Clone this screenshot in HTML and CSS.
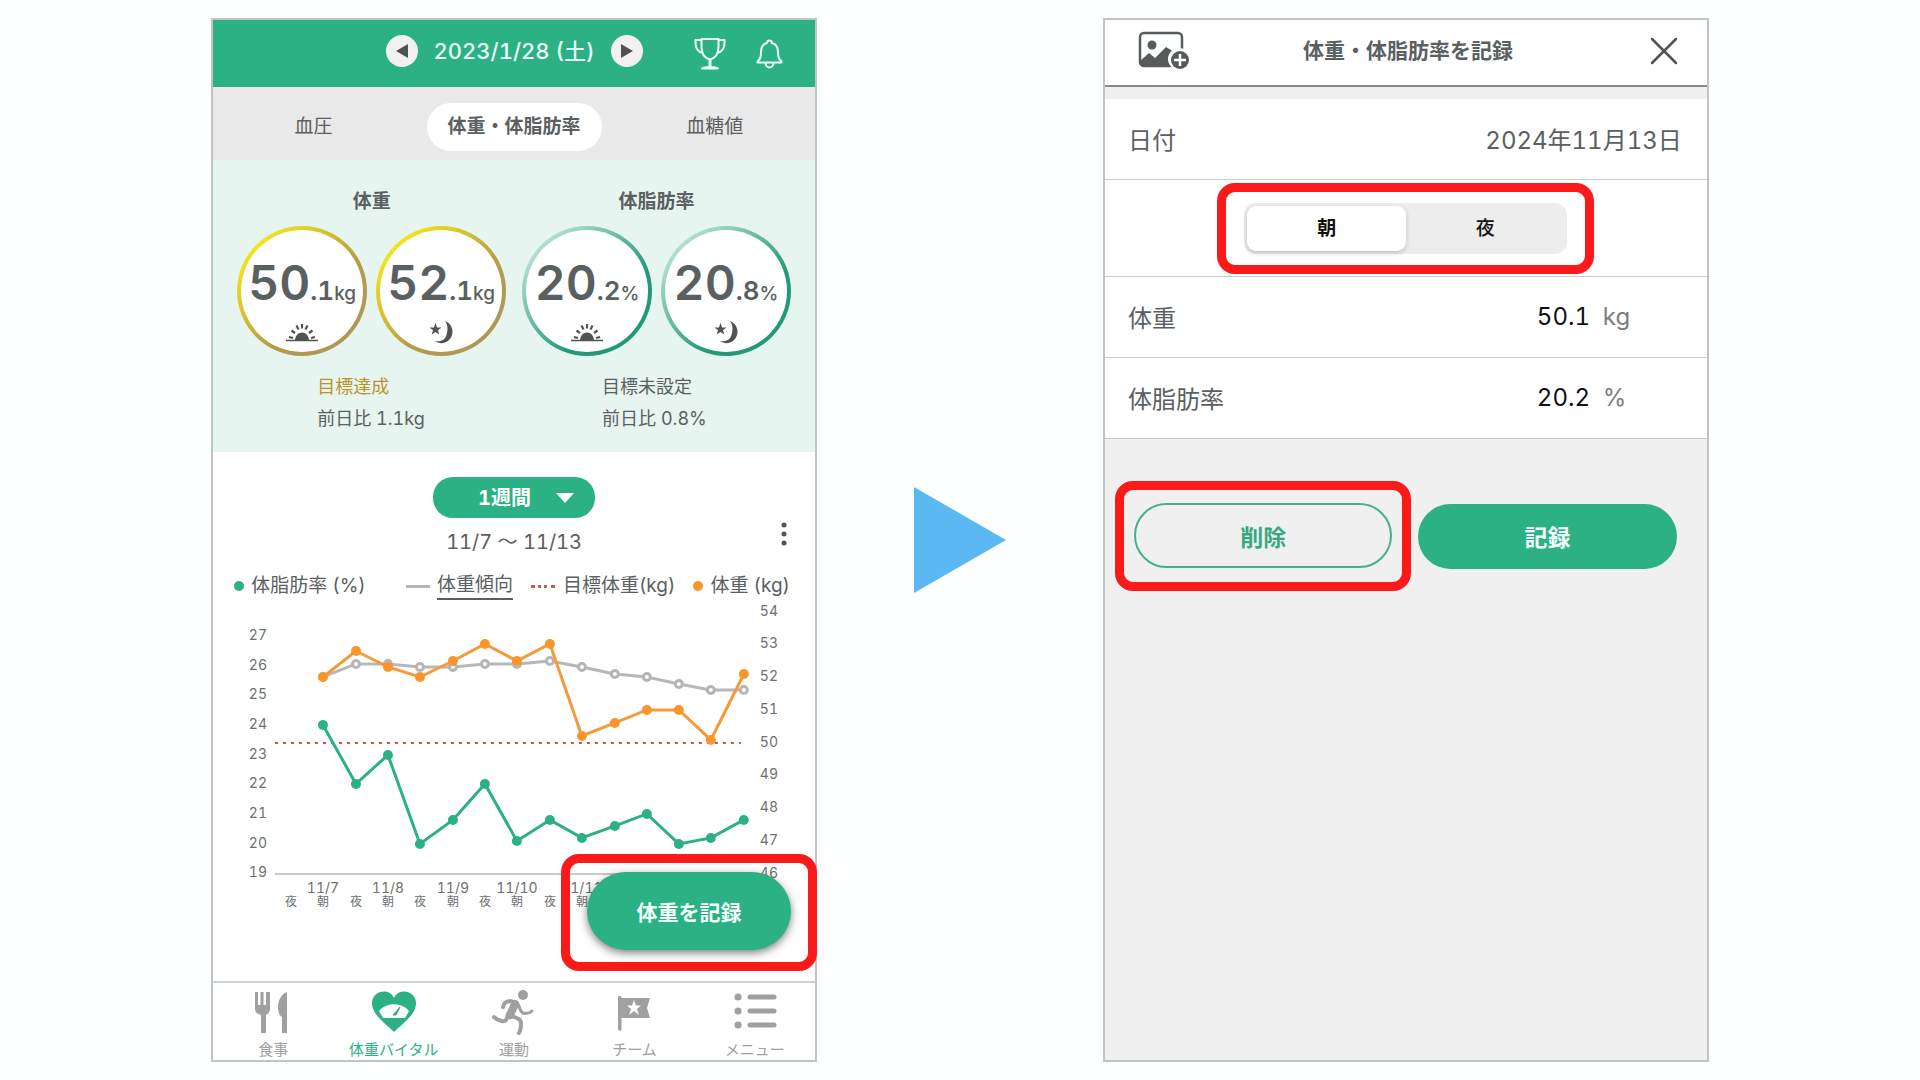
FILE: index.html
```html
<!DOCTYPE html>
<html lang="ja">
<head>
    <meta charset="UTF-8">
    <meta name="viewport" content="width=device-width, initial-scale=1.0">
    <title>体重・体脂肪率の記録</title>
    <link rel="stylesheet" href="styles.css">
</head>
<body>
    <svg class="defs" width="0" height="0" aria-hidden="true">
        <symbol id="sun" viewBox="0 0 32 24">
            <path d="M0 20.500h32" stroke="#4f5453" stroke-width="1.500"/>
            <path d="M9 20a7 7.500 0 0 1 14 0z" fill="#4f5453"/>
            <path d="M3 17l4 1M5.500 10.500l3.500 2.500M10.500 5.500l2 4M16 4v4.500M21.500 5.500l-2 4M26.500 10.500L23 13M29 17l-4 1" stroke="#4f5453" stroke-width="2.200"/>
        </symbol>
        <symbol id="moon" viewBox="0 0 24 24">
            <path d="M16 1c8 3 10 13 4 19-4 4-10 4-14 1 6 1 10-1 11.500-6C19 10 19 5 16 1z" fill="#4f5453"/>
            <path d="M6.500 3l1.600 4.500h4.400L9 10.200l1.300 4.400-3.800-2.700-3.800 2.700L4 10.200.500 7.500h4.400z" fill="#4f5453"/>
        </symbol>
    </svg>

    <main class="page">
        <section class="phone">
            <header class="app-header">
                <div class="date-nav">
                    <button class="round-btn" aria-label="前の日">
                        <svg width="12" height="14" viewBox="0 0 12 14"><path d="M12 0v14L0 7z" fill="#4f5453"/></svg>
                    </button>
                    <span class="date">2023/1/28 (土)</span>
                    <button class="round-btn" aria-label="次の日">
                        <svg width="12" height="14" viewBox="0 0 12 14"><path d="M0 0v14l12-7z" fill="#4f5453"/></svg>
                    </button>
                </div>
                <div class="header-icons">
                    <button class="icon-btn" aria-label="トロフィー">
                        <svg width="32" height="34" viewBox="0 0 32 34" fill="none" stroke="#e9fff8" stroke-width="2" stroke-linejoin="round">
                            <path d="M7.500 2h17v8c0 6-3 11-8.500 12.500C10.500 21 7.500 16 7.500 10z"/>
                            <path d="M7.500 3H1.500v3c0 6 3 9 7.500 10M24.500 3h6v3c0 6-3 9-7.500 10"/>
                            <path d="M16 22.500V30" stroke-width="3"/>
                            <path d="M8 31.500c2-1.500 5-1.500 8-1.500s6 0 8 1.500z"/>
                        </svg>
                    </button>
                    <button class="icon-btn" aria-label="お知らせ">
                        <svg width="27" height="30" viewBox="0 0 27 30" fill="none" stroke="#e9fff8" stroke-width="2" stroke-linecap="round" stroke-linejoin="round">
                            <path d="M11 4a2.500 2.500 0 0 1 5 0c4 1 6 4.500 6 9 0 6 1 7 3.500 9.500v1h-24v-1C4 20 5 19 5 13c0-4.500 2-8 6-9z"/>
                            <path d="M9.500 24a4 4.500 0 0 0 8 0"/>
                        </svg>
                    </button>
                </div>
            </header>

            <nav class="tabs">
                <a class="tab" href="#">血圧</a>
                <a class="tab active" href="#">体重・体脂肪率</a>
                <a class="tab" href="#">血糖値</a>
            </nav>

            <div class="summary">
                <div class="group">
                    <h2>体重</h2>
                    <div class="rings">
                        <div class="ring gold">
                            <p class="value"><b>50</b><span class="decimal">.1</span><span class="unit">kg</span></p>
                            <svg width="32" height="24"><use href="#sun"/></svg>
                        </div>
                        <div class="ring gold">
                            <p class="value"><b>52</b><span class="decimal">.1</span><span class="unit">kg</span></p>
                            <svg width="24" height="24"><use href="#moon"/></svg>
                        </div>
                    </div>
                    <p class="note"><span class="achieved">目標達成</span><br>前日比 1.1kg</p>
                </div>
                <div class="group">
                    <h2>体脂肪率</h2>
                    <div class="rings">
                        <div class="ring green">
                            <p class="value"><b>20</b><span class="decimal">.2</span><span class="unit">%</span></p>
                            <svg width="32" height="24"><use href="#sun"/></svg>
                        </div>
                        <div class="ring green">
                            <p class="value"><b>20</b><span class="decimal">.8</span><span class="unit">%</span></p>
                            <svg width="24" height="24"><use href="#moon"/></svg>
                        </div>
                    </div>
                    <p class="note">目標未設定<br>前日比 0.8%</p>
                </div>
            </div>

            <div class="chart-head">
                <div class="period">
                    <div class="select-wrap">
                        <select aria-label="期間">
                            <option>1週間</option>
                        </select>
                    </div>
                    <p class="range">11/7 〜 11/13</p>
                </div>
                <button class="icon-btn kebab" aria-label="その他">
                    <svg width="6" height="24" viewBox="0 0 6 24" fill="#4f5453"><circle cx="3" cy="3" r="2.500"/><circle cx="3" cy="12" r="2.500"/><circle cx="3" cy="21" r="2.500"/></svg>
                </button>
            </div>

            <ul class="legend">
                <li><i class="dot fat"></i>体脂肪率 (%)</li>
                <li><i class="line"></i><a href="#">体重傾向</a></li>
                <li><i class="dash"></i>目標体重(kg)</li>
                <li><i class="dot weight"></i>体重 (kg)</li>
            </ul>

            <svg class="chart" viewBox="0 0 602 380" role="img" aria-label="体重と体脂肪率のグラフ">
                <g class="axis left">
                    <text x="54" y="40">27</text><text x="54" y="70">26</text><text x="54" y="99">25</text>
                    <text x="54" y="129">24</text><text x="54" y="159">23</text><text x="54" y="188">22</text>
                    <text x="54" y="218">21</text><text x="54" y="248">20</text><text x="54" y="277">19</text>
                </g>
                <g class="axis">
                    <text x="547" y="16">54</text><text x="547" y="48">53</text><text x="547" y="81">52</text>
                    <text x="547" y="114">51</text><text x="547" y="147">50</text><text x="547" y="179">49</text>
                    <text x="547" y="212">48</text><text x="547" y="245">47</text><text x="547" y="278">46</text>
                </g>
                <g class="axis days">
                    <text x="110" y="293">11/7</text><text x="175" y="293">11/8</text><text x="240" y="293">11/9</text>
                    <text x="304" y="293">11/10</text><text x="369" y="293">11/11</text>
                </g>
                <g class="axis times">
                    <text x="78" y="306">夜</text><text x="110" y="306">朝</text><text x="143" y="306">夜</text>
                    <text x="175" y="306">朝</text><text x="207" y="306">夜</text><text x="240" y="306">朝</text>
                    <text x="272" y="306">夜</text><text x="304" y="306">朝</text><text x="337" y="306">夜</text>
                    <text x="369" y="306">朝</text>
                </g>
                <path d="M62 274H540" stroke="#b5b8b8" stroke-width="1.500"/>
                <path d="M62 143H528" stroke="#c4554f" stroke-width="2" stroke-dasharray="3 5"/>

                <!-- 体重傾向 -->
                <polyline class="series trend" points="110,77 143,64 175,64 207,67 240,67 272,64 304,64 337,61 369,67 402,74 434,77 466,84 498,90 531,90"/>
                <g class="trend-dots">
                    <circle cx="110" cy="77" r="3.500"/><circle cx="143" cy="64" r="3.500"/><circle cx="175" cy="64" r="3.500"/>
                    <circle cx="207" cy="67" r="3.500"/><circle cx="240" cy="67" r="3.500"/><circle cx="272" cy="64" r="3.500"/>
                    <circle cx="304" cy="64" r="3.500"/><circle cx="337" cy="61" r="3.500"/><circle cx="369" cy="67" r="3.500"/>
                    <circle cx="402" cy="74" r="3.500"/><circle cx="434" cy="77" r="3.500"/><circle cx="466" cy="84" r="3.500"/>
                    <circle cx="498" cy="90" r="3.500"/><circle cx="531" cy="90" r="3.500"/>
                </g>

                <!-- 体重 -->
                <polyline class="series weight" points="110,77 143,51 175,67 207,77 240,61 272,44 304,61 337,44 369,136 402,123 434,110 466,110 498,140 531,74"/>
                <g fill="#fb952b">
                    <circle cx="110" cy="77" r="5"/><circle cx="143" cy="51" r="5"/><circle cx="175" cy="67" r="5"/>
                    <circle cx="207" cy="77" r="5"/><circle cx="240" cy="61" r="5"/><circle cx="272" cy="44" r="5"/>
                    <circle cx="304" cy="61" r="5"/><circle cx="337" cy="44" r="5"/><circle cx="369" cy="136" r="5"/>
                    <circle cx="402" cy="123" r="5"/><circle cx="434" cy="110" r="5"/><circle cx="466" cy="110" r="5"/>
                    <circle cx="498" cy="140" r="5"/><circle cx="531" cy="74" r="5"/>
                </g>

                <!-- 体脂肪率 -->
                <polyline class="series fat" points="110,125 143,184 175,155 207,244 240,220 272,184 304,241 337,220 369,238 402,226 434,214 466,244 498,238 531,220"/>
                <g fill="#2bb183">
                    <circle cx="110" cy="125" r="5"/><circle cx="143" cy="184" r="5"/><circle cx="175" cy="155" r="5"/>
                    <circle cx="207" cy="244" r="5"/><circle cx="240" cy="220" r="5"/><circle cx="272" cy="184" r="5"/>
                    <circle cx="304" cy="241" r="5"/><circle cx="337" cy="220" r="5"/><circle cx="369" cy="238" r="5"/>
                    <circle cx="402" cy="226" r="5"/><circle cx="434" cy="214" r="5"/><circle cx="466" cy="244" r="5"/>
                    <circle cx="498" cy="238" r="5"/><circle cx="531" cy="220" r="5"/>
                </g>
            </svg>

            <div class="highlight fab-wrap">
                <button class="fab">体重を記録</button>
            </div>

            <nav class="bottom-nav">
                <a href="#">
                    <svg width="46" height="46" viewBox="0 0 46 46" fill="currentColor">
                        <path d="M5 2h3v13h2.500V2h3v13H16V2h4v17c0 3-2 5-4 6v18h-5V25c-4-1-6-3-6-6z"/>
                        <path d="M37 2v41h-5V27c-6-3-6-21 5-25z"/>
                    </svg>
                    食事
                </a>
                <a class="active" href="#">
                    <svg width="46" height="46" viewBox="0 0 46 46">
                        <path d="M23 42C15 34 1 25 1 13 1 1 18-3 23 8 28-3 45 1 45 13c0 12-14 21-22 29z" fill="currentColor"/>
                        <path d="M8 21c7-9 23-9 30 0l-4 7H12z" fill="#fff"/>
                        <path d="M22 25l7-8-4 8z" fill="currentColor" stroke="currentColor"/>
                    </svg>
                    体重バイタル
                </a>
                <a href="#">
                    <svg width="46" height="46" viewBox="0 0 46 46" fill="none" stroke="currentColor" stroke-linecap="round" stroke-linejoin="round">
                        <circle cx="32" cy="5" r="5" fill="currentColor" stroke="none"/>
                        <path d="M12 17c1-5 4-6 8-6l5 2" stroke-width="4"/>
                        <path d="M24 14l-5 11" stroke-width="8"/>
                        <path d="M27 14c2 3 2 8 5 9s7 0 9-2" stroke-width="3"/>
                        <path d="M20 26c6 2 10 3 10 7 0 3 0 7-2 10" stroke-width="4"/>
                        <path d="M17 24c-1 5-2 8-6 7s-5-1-8-4" stroke-width="4"/>
                    </svg>
                    運動
                </a>
                <a href="#">
                    <svg width="46" height="46" viewBox="0 0 46 46">
                        <path d="M7 7.500a1.500 1.500 0 0 1 3.500 0V8H39l-3 10 3 10H10.500v11a1.500 1.500 0 0 1-3.500 0z" fill="currentColor"/>
                        <path d="M23 10l2 5.500h5l-4 3.500 2 6-5-4-5 4 2-6-4-3.500h5z" fill="#fff"/>
                    </svg>
                    チーム
                </a>
                <a href="#">
                    <svg width="46" height="46" viewBox="0 0 46 46" stroke="currentColor" stroke-linecap="round">
                        <path d="M18 7h24M18 21h24M18 35h24" stroke-width="5"/>
                        <path d="M6 7h.1M6 21h.1M6 35h.1" stroke-width="7"/>
                    </svg>
                    メニュー
                </a>
            </nav>
        </section>

        <svg class="arrow" width="92" height="106" viewBox="0 0 92 106" aria-hidden="true"><path d="M0 0l92 53L0 106z" fill="#5cb8f2"/></svg>

        <section class="phone record">
            <header class="record-header">
                <button class="icon-btn" aria-label="写真を追加">
                    <svg width="52" height="40" viewBox="0 0 52 40">
                        <rect x="2" y="2" width="42" height="33" rx="4" fill="#fff" stroke="#565c5b" stroke-width="2.500"/>
                        <circle cx="14" cy="14" r="4.500" fill="#565c5b"/>
                        <path d="M2 30l9-8 6 5L28 16l5 3 11 10v6H4z" fill="#565c5b"/>
                        <circle cx="41" cy="28" r="11" fill="#fff"/>
                        <circle cx="42" cy="29" r="9" fill="#565c5b"/>
                        <path d="M42 23v12M36 29h12" stroke="#fff" stroke-width="2.500"/>
                    </svg>
                </button>
                <h1>体重・体脂肪率を記録</h1>
                <button class="icon-btn close" aria-label="閉じる">
                    <svg width="28" height="28" viewBox="0 0 28 28"><path d="M2 2l24 24M26 2L2 26" stroke="#4f5453" stroke-width="2.500" stroke-linecap="round"/></svg>
                </button>
            </header>

            <form class="form">
                <div class="row">
                    <span>日付</span>
                    <time datetime="2024-11-13">2024年11月13日</time>
                </div>
                <div class="row segment-row">
                    <div class="highlight segment-wrap">
                        <div class="segment">
                            <input type="radio" name="time" id="morning" checked>
                            <label for="morning">朝</label>
                            <input type="radio" name="time" id="night">
                            <label for="night">夜</label>
                        </div>
                    </div>
                </div>
                <div class="row">
                    <label for="weight">体重</label>
                    <div class="field"><input type="text" id="weight" value="50.1"><span>kg</span></div>
                </div>
                <div class="row">
                    <label for="fat">体脂肪率</label>
                    <div class="field"><input type="text" id="fat" value="20.2"><span>%</span></div>
                </div>
                <div class="actions">
                    <div class="highlight delete-wrap">
                        <button type="button" class="btn outline">削除</button>
                    </div>
                    <button type="button" class="btn">記録</button>
                </div>
            </form>
        </section>
    </main>
</body>
</html>
```
FILE: styles.css
```css
* {
    box-sizing: border-box;
}

body {
    margin: 0;
    background-color: #fdfffe;
    color: #5a605f;
    font-family: Inter, "Noto Sans CJK JP", sans-serif;
    font-size: 19px;
    font-variant-numeric: tabular-nums;
}

h1, h2, p, ul {
    margin: 0;
    padding: 0;
}

a {
    color: inherit;
    text-decoration: none;
}

button, input, select {
    font-family: inherit;
    font-variant-numeric: inherit;
    color: inherit;
}

.defs {
    position: absolute;
}

.page {
    display: grid;
    grid-template-columns: 1fr auto 1fr;
    gap: 97px;
    align-items: center;
    padding: 18px 11%;
}

.phone {
    position: relative;
    display: flex;
    flex-direction: column;
    min-height: calc(100vh - 36px);
    border: 2px solid #bfc4c4;
    background-color: #fff;
}

/* 赤枠 */
.highlight {
    border: 9px solid #fb1a1a;
    border-radius: 18px;
}

.icon-btn {
    display: flex;
    padding: 0;
    border: none;
    background: none;
}

/* ヘッダー */
.app-header {
    display: grid;
    grid-template-columns: 1fr auto 1fr;
    align-items: center;
    height: 67px;
    padding-right: 32px;
    padding-left: 32px;
    background-color: #2bb183;
}

.date-nav {
    grid-column: 2;
    display: flex;
    align-items: center;
    gap: 16px;
    padding-bottom: 5px;
    color: #e9fff8;
}

.date {
    font-size: 22px;
    font-weight: 500;
    line-height: 32px;
}

.round-btn {
    display: flex;
    align-items: center;
    justify-content: center;
    width: 32px;
    height: 32px;
    padding: 0;
    border: none;
    border-radius: 50%;
    background-color: #f1f1f1;
}

.header-icons {
    display: flex;
    justify-content: flex-end;
    align-items: center;
    gap: 30px;
}

/* タブ */
.tabs {
    display: grid;
    grid-template-columns: repeat(3, 1fr);
    align-items: center;
    justify-items: center;
    height: 73px;
    padding-top: 6px;
    background-color: #e9e9e9;
}

.tab {
    padding: 10px 21px;
    line-height: 28px;
}

.tab.active {
    border-radius: 24px;
    background-color: #fff;
    font-weight: 700;
}

/* サマリー */
.summary {
    display: flex;
    gap: 16px;
    padding: 28px 24px 17px;
    background-color: #e6f5f0;
}

.group {
    flex: 1;
}

.group h2 {
    margin-bottom: 10px;
    font-size: 19px;
    line-height: 28px;
    text-align: center;
}

.rings {
    display: flex;
    justify-content: space-between;
}

.ring {
    display: flex;
    flex-direction: column;
    align-items: center;
    width: 130px;
    height: 130px;
    padding-top: 31px;
    border: 4px solid transparent;
    border-radius: 50%;
}

.ring.gold {
    background: linear-gradient(#fff, #fff) padding-box, linear-gradient(135deg, #f2e41c 15%, #b59c4a 60%, #ab9560) border-box;
}

.ring.green {
    background: linear-gradient(#fff, #fff) padding-box, linear-gradient(135deg, #b2dfd0 15%, #25997a 65%, #1c9a77) border-box;
}

.value {
    margin-bottom: 4px;
    line-height: 44px;
    white-space: nowrap;
}

.value b {
    font-size: 48px;
    font-weight: 600;
}

.decimal {
    font-size: 26px;
    font-weight: 600;
}

.unit {
    font-size: 19px;
    font-weight: 500;
}

.note {
    padding: 15px 0 0 80px;
    font-size: 18px;
    line-height: 32px;
}

.achieved {
    color: #b8932c;
}

/* グラフ */
.chart-head {
    display: grid;
    grid-template-columns: 1fr auto 1fr;
    padding: 25px 28px 0;
}

.period {
    grid-column: 2;
    text-align: center;
}

.select-wrap {
    position: relative;
}

.select-wrap::after {
    content: "";
    position: absolute;
    top: 16px;
    right: 21px;
    border: 9px solid transparent;
    border-top: 10px solid #fff;
    border-bottom: none;
    pointer-events: none;
}

.select-wrap select {
    appearance: none;
    width: 162px;
    height: 41px;
    padding: 0 55px 0 45px;
    border: none;
    border-radius: 20px;
    background-color: #2bb183;
    color: #fff;
    font-size: 20px;
    font-weight: 700;
}

.range {
    margin-top: 10px;
    font-size: 20px;
    line-height: 28px;
}

.kebab {
    align-self: end;
    justify-self: end;
    margin-bottom: 10px;
}

.legend {
    display: flex;
    gap: 18px;
    margin-top: 16px;
    padding: 0 25px 0 21px;
    list-style: none;
    line-height: 26px;
    white-space: nowrap;
}

.legend li {
    display: flex;
    align-items: center;
    height: 28px;
}

.legend li:first-child {
    margin-right: auto;
}

.legend a {
    border-bottom: 2px solid #5a605f;
}

.dot {
    width: 10px;
    height: 10px;
    margin-right: 7px;
    border-radius: 50%;
}

.dot.fat {
    background-color: #2bb183;
}

.dot.weight {
    background-color: #fb952b;
}

.line {
    width: 24px;
    margin-right: 7px;
    border-top: 3px solid #b5b5b5;
}

.dash {
    width: 24px;
    margin-right: 8px;
    border-top: 3px dotted #d0584f;
}

.chart {
    display: block;
    width: 100%;
}

.axis {
    fill: #6c7170;
    font-size: 14px;
}

.axis.left {
    text-anchor: end;
}

.axis.days, .axis.times {
    text-anchor: middle;
}

.axis.times {
    font-size: 12px;
}

.series {
    fill: none;
    stroke-width: 3;
}

.series.trend {
    stroke: #b8b8b8;
}

.series.weight {
    stroke: #f59a3c;
}

.series.fat {
    stroke: #2bb183;
}

.trend-dots {
    fill: #fff;
    stroke: #b5b5b5;
    stroke-width: 3;
}

.fab-wrap {
    position: absolute;
    right: -2px;
    bottom: 89px;
    padding: 9px 17px 12px;
}

.fab {
    display: block;
    width: 204px;
    height: 78px;
    border: none;
    border-radius: 39px;
    background-color: #2bb183;
    box-shadow: 0 3px 8px rgba(0, 0, 0, 0.5);
    color: #f3fffb;
    font-size: 21px;
    font-weight: 700;
}

/* 下部ナビ */
.bottom-nav {
    display: flex;
    height: 79px;
    margin-top: auto;
    border-top: 2px solid #ccd0d0;
    color: #9fa0a0;
    font-size: 15px;
    line-height: 20px;
}

.bottom-nav a {
    flex: 1;
    display: flex;
    flex-direction: column;
    align-items: center;
    padding-top: 7px;
}

.bottom-nav svg {
    margin-bottom: 4px;
    overflow: visible;
}

.bottom-nav .active {
    color: #2bb183;
}

/* 記録画面 */
.record {
    background-color: #f0f0f0;
}

.record-header {
    display: grid;
    grid-template-columns: 1fr auto 1fr;
    align-items: center;
    height: 67px;
    margin-bottom: 12px;
    padding: 0 29px 4px 33px;
    border-bottom: 2px solid #858989;
    background-color: #fff;
}

.record-header h1 {
    font-size: 21px;
    line-height: 30px;
}

.close {
    justify-self: end;
}

.row {
    display: flex;
    align-items: center;
    justify-content: space-between;
    height: 81px;
    padding: 0 25px 2px 23px;
    border-bottom: 1px solid #c6cccc;
    background-color: #fff;
    font-size: 24px;
}

.segment-row {
    justify-content: center;
    height: 97px;
    padding: 1px 0 0;
}

.segment-wrap {
    padding: 11px 18px;
}

.segment {
    display: flex;
    width: 323px;
    padding: 3px;
    border-radius: 12px;
    background-color: #ededed;
}

.segment input {
    position: absolute;
    opacity: 0;
}

.segment label {
    flex: 1;
    border-radius: 9px;
    color: #111;
    font-size: 19px;
    font-weight: 500;
    line-height: 45px;
    text-align: center;
}

.segment input:checked + label {
    background-color: #fff;
    box-shadow: 0 2px 5px rgba(0, 0, 0, 0.2);
    font-weight: 700;
}

.field {
    display: flex;
    align-items: center;
}

.field input {
    width: 66px;
    padding: 0;
    border: none;
    background: none;
    color: #111;
    font-size: 24px;
}

.field span {
    width: 79px;
    color: #7a7f7e;
}

.actions {
    display: flex;
    align-items: center;
    gap: 7px;
    padding: 42px 30px 0 10px;
}

.delete-wrap {
    flex: 1 1 38px;
    display: flex;
    padding: 13px 10px 14px;
}

.btn {
    flex: 1;
    height: 65px;
    padding: 0;
    border: none;
    border-radius: 33px;
    background-color: #2bb183;
    color: #f3fffb;
    font-size: 23px;
    font-weight: 700;
}

.btn.outline {
    border: 2px solid #43b18c;
    background: none;
    color: #38a880;
}
```
